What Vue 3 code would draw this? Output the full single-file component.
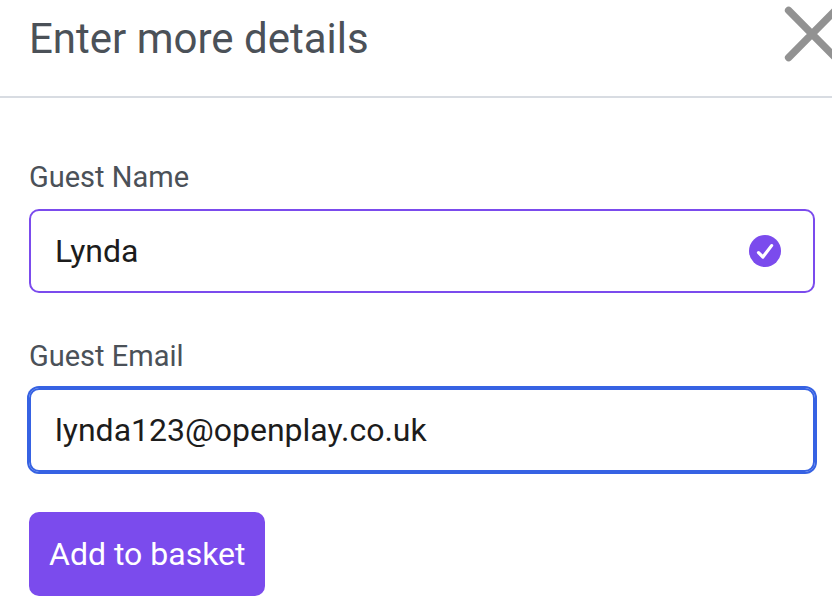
<script setup>
import { ref } from 'vue'

const guestName = ref('Lynda')
const guestEmail = ref('lynda123@openplay.co.uk')
</script>

<template>
  <main class="dialog">
    <header class="header">
      <h1 class="title">Enter more details</h1>
      <button class="close" type="button" aria-label="Close">
        <svg viewBox="0 0 56 56" width="56" height="56" fill="none" stroke="#929292" stroke-width="7.4" stroke-linecap="round">
          <path d="M4.6 4.4 L51.4 51.6 M51.4 4.4 L4.6 51.6" />
        </svg>
      </button>
    </header>
    <form class="form" @submit.prevent>
      <label class="label" for="guest-name">Guest Name</label>
      <div class="field valid">
        <input id="guest-name" v-model="guestName" class="input" type="text" />
        <svg class="tick" viewBox="0 0 32 32" width="32" height="32" fill="none">
          <circle cx="16" cy="16" r="16" fill="#7b4bed" />
          <path d="M9.5 17.6 L13.9 22 L22.6 10.6" stroke="#fff" stroke-width="3.2" stroke-linecap="round" stroke-linejoin="round" />
        </svg>
      </div>
      <label class="label" for="guest-email">Guest Email</label>
      <div class="field active">
        <input id="guest-email" v-model="guestEmail" class="input" type="email" />
      </div>
      <button class="submit" type="submit">Add to basket</button>
    </form>
  </main>
</template>

<style>
body {
  background: #fff;
  overflow-x: hidden;
}
</style>

<style scoped>
.dialog {
  font-family: Roboto, "Liberation Sans", sans-serif;
  color: #4b5158;
  overflow: hidden;
}
.header {
  display: flex;
  align-items: flex-start;
  justify-content: space-between;
  height: 96px;
  padding-left: 29px;
  border-bottom: 2px solid #d8dce2;
}
.title {
  margin: 0;
  padding-top: 14px;
  font-size: 42px;
  line-height: 50px;
  font-weight: 400;
}
.close {
  flex: none;
  margin: 6px -8px 0 0;
  padding: 0;
  border: 0;
  background: none;
}
.close svg {
  display: block;
}
.form {
  display: flex;
  flex-direction: column;
  padding: 62px 17px 16px 29px;
}
.label {
  font-size: 29px;
  line-height: 34px;
  margin-bottom: 15px;
}
.field {
  display: flex;
  align-items: center;
  box-sizing: border-box;
  height: 84px;
  padding: 0 32px 0 24px;
  border: 2px solid #7b4bed;
  border-radius: 10px;
  margin-bottom: 46px;
}
.field.active {
  border-color: #3662e3;
  box-shadow: 0 0 0 2px #3662e3;
  margin-bottom: 40px;
}
.input {
  flex: 1;
  min-width: 0;
  padding: 0;
  border: 0;
  outline: 0;
  background: none;
  color: #1c1c1c;
  font: 32px/40px Roboto, "Liberation Sans", sans-serif;
}
.tick {
  flex: none;
}
.submit {
  align-self: flex-start;
  height: 84px;
  padding: 0 20px;
  border: 0;
  border-radius: 10px;
  background: #7b4bed;
  color: #fff;
  font: 32px/40px Roboto, "Liberation Sans", sans-serif;
}
</style>
